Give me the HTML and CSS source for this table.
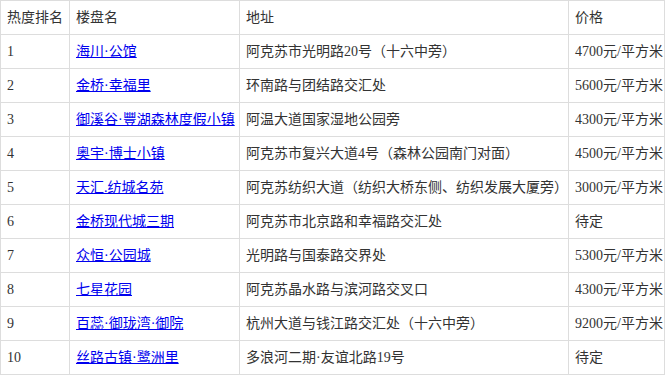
FILE: index.html
```html
<!DOCTYPE html>
<html lang="zh-CN">
<head>
<meta charset="utf-8">
<link rel="stylesheet" href="styles.css">
</head>
<body>
<table class="rank">
  <colgroup>
    <col class="c1"><col class="c2"><col class="c3"><col class="c4">
  </colgroup>
  <thead>
    <tr><th>热度排名</th><th>楼盘名</th><th>地址</th><th>价格</th></tr>
  </thead>
  <tbody>
    <tr><td>1</td><td><a href="#">海川·公馆</a></td><td>阿克苏市光明路20号（十六中旁）</td><td>4700元/平方米</td></tr>
    <tr><td>2</td><td><a href="#">金桥·幸福里</a></td><td>环南路与团结路交汇处</td><td>5600元/平方米</td></tr>
    <tr><td>3</td><td><a href="#">御溪谷·豐湖森林度假小镇</a></td><td>阿温大道国家湿地公园旁</td><td>4300元/平方米</td></tr>
    <tr><td>4</td><td><a href="#">奥宇·博士小镇</a></td><td>阿克苏市复兴大道4号（森林公园南门对面）</td><td>4500元/平方米</td></tr>
    <tr><td>5</td><td><a href="#">天汇.纺城名苑</a></td><td>阿克苏纺织大道（纺织大桥东侧、纺织发展大厦旁）</td><td>3000元/平方米</td></tr>
    <tr><td>6</td><td><a href="#">金桥现代城三期</a></td><td>阿克苏市北京路和幸福路交汇处</td><td>待定</td></tr>
    <tr><td>7</td><td><a href="#">众恒·公园城</a></td><td>光明路与国泰路交界处</td><td>5300元/平方米</td></tr>
    <tr><td>8</td><td><a href="#">七星花园</a></td><td>阿克苏晶水路与滨河路交叉口</td><td>4300元/平方米</td></tr>
    <tr><td>9</td><td><a href="#">百蕊·御珑湾·御院</a></td><td>杭州大道与钱江路交汇处（十六中旁）</td><td>9200元/平方米</td></tr>
    <tr><td>10</td><td><a href="#">丝路古镇·鹭洲里</a></td><td>多浪河二期·友谊北路19号</td><td>待定</td></tr>
  </tbody>
</table>
</body>
</html>
```

FILE: styles.css
```css
html, body {
  margin: 0;
  padding: 0;
  background: #fff;
}
body {
  font-family: "Liberation Serif", "Noto Sans CJK SC", serif;
  font-size: 14px;
  color: #333;
}
.rank {
  border-collapse: separate;
  border-spacing: 0;
  table-layout: fixed;
  width: 665px;
  border-top: 1px solid #ddd;
  border-left: 1px solid #ddd;
}
.c1 { width: 69px; }
.c2 { width: 170px; }
.c3 { width: 329px; }
.c4 { width: 96px; }
.rank th,
.rank td {
  box-sizing: border-box;
  border-right: 1px solid #ddd;
  border-bottom: 1px solid #ddd;
  padding: 0 0 0 6px;
  height: 34px;
  line-height: 18px;
  text-align: left;
  font-weight: normal;
  white-space: nowrap;
  overflow: hidden;
  vertical-align: middle;
}
.rank a {
  color: #00e;
  text-decoration: underline;
}
```
